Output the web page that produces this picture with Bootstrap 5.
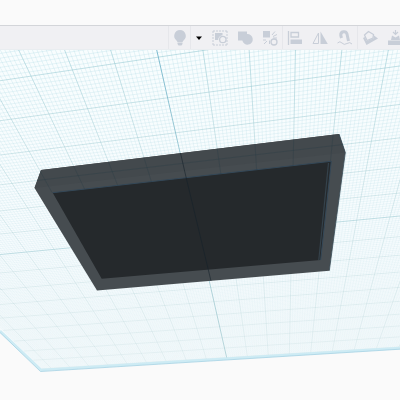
<!DOCTYPE html>
<html lang="en">
<head>
<meta charset="utf-8">
<meta name="viewport" content="width=device-width, initial-scale=1">
<title>3D design workplane</title>
<link href="https://cdn.jsdelivr.net/npm/bootstrap@5.3.0/dist/css/bootstrap.min.css" rel="stylesheet">
<style>
body { background: #fafafa; font-family: "Open Sans", sans-serif; }
.app-header { height: 25px; }
.tool-strip { background: #f0f0f3; border-top: 1px solid #d3d5d9; border-bottom: 1px solid #e9edf0; height: 25px; }
.tool-set { margin-right: -7px; }
.tool { width: 25px; height: 23px; background: transparent; color: #c8ced8; border: 0; }
.tool svg { width: 18px; height: 18px; display: block; }
.tool-light { width: 22px; }
.tool-more { width: 17px; }
.tool-more svg { width: 6px; height: 4px; }
.ruled { border-left: 1px solid #e6e7eb; }
.scene { width: 100%; aspect-ratio: 8 / 7; display: block; }
</style>
<script src="https://cdn.jsdelivr.net/npm/bootstrap@5.3.0/dist/js/bootstrap.bundle.min.js"></script>
</head>
<body class="overflow-hidden">
<header class="app-header"></header>
<nav class="tool-strip d-flex justify-content-end overflow-hidden" aria-label="Edit tools">
  <div class="tool-set d-flex flex-shrink-0 align-items-center">
    <button class="tool tool-light ruled p-0 d-flex align-items-center justify-content-center" aria-label="Toggle notes">
      <svg viewBox="0 0 18 18" fill="currentColor"><path d="M9 1a5.800 5.800 0 0 0-3.500 10.400L6.500 13h5l1-1.600A5.800 5.800 0 0 0 9 1zM6.500 13.500h5V15l-1 1.500h-3L6.500 15z"/></svg>
    </button>
    <button class="tool tool-more ruled p-0 d-flex align-items-center justify-content-center" aria-label="More visibility options">
      <svg viewBox="0 0 6 4"><path d="M0 .5h6L3 4z" fill="#000"/></svg>
    </button>
    <button class="tool p-0 d-flex align-items-center justify-content-center" aria-label="Group preview">
      <svg viewBox="0 0 18 18" fill="none" stroke="currentColor"><path d="M2 2h14M2 16h14M2 2v14M16 2v14" stroke-dasharray="2 1"/><path d="M4 4h7.500v2.200a4.500 4.500 0 0 0-4.300 4.800H4z" fill="currentColor" stroke="none"/><circle cx="11.800" cy="10.500" r="3.200" stroke-width="1.300"/></svg>
    </button>
    <button class="tool p-0 d-flex align-items-center justify-content-center" aria-label="Group">
      <svg viewBox="0 0 18 18" fill="currentColor"><path d="M2 2.500h9v2.600a5.300 5.300 0 1 1-4.700 6.400H2z"/></svg>
    </button>
    <button class="tool p-0 d-flex align-items-center justify-content-center" aria-label="Ungroup">
      <svg viewBox="0 0 18 18" fill="none" stroke="currentColor"><path d="M2 2h7v6.500H2z" fill="currentColor" stroke="none"/><circle cx="13" cy="13" r="3" stroke-width="1.300"/><path d="M11 6l3-3.500M12 7.500l4-2M12 9h4M2 11h3M3 15l3-3M8.500 11.500v3.500"/></svg>
    </button>
    <button class="tool ruled p-0 d-flex align-items-center justify-content-center" aria-label="Align">
      <svg viewBox="0 0 18 18" fill="none" stroke="currentColor"><path d="M2.500 2v14" stroke-width="1.300"/><path d="M5 3.500h7.500v4.500H5z" stroke-width="1.300"/><path d="M4.500 10.500H16v4.500H4.500z" fill="currentColor" stroke="none"/></svg>
    </button>
    <button class="tool p-0 d-flex align-items-center justify-content-center" aria-label="Mirror">
      <svg viewBox="0 0 18 18"><path d="M7.500 4v10.500H2z" fill="none" stroke="currentColor"/><path d="M9.500 2.500L16.800 15h-7.300z" fill="currentColor"/></svg>
    </button>
    <button class="tool p-0 d-flex align-items-center justify-content-center" aria-label="Cruise">
      <svg viewBox="0 0 18 18" fill="none" stroke="currentColor"><path d="M5.500 9L4.800 6.500C4.300 2 10 1.500 11 5L12.500 12" stroke-width="3"/><path d="M1.500 14q2.500-2.500 4.500 0t5 .5 5 .5"/></svg>
    </button>
    <button class="tool ruled p-0 d-flex align-items-center justify-content-center" aria-label="Workplane">
      <svg viewBox="0 0 18 18"><path d="M2 9l2-1 1.500 4 7-2.500.5-3 4 3L5.500 16z" fill="currentColor"/><path d="M3.500 6L7.500 2.500 12.500 5.500l-.5 3.500-6 2.500z" fill="none" stroke="currentColor" stroke-width="1.300"/></svg>
    </button>
    <button class="tool p-0 d-flex align-items-center justify-content-center" aria-label="Drop to workplane">
      <svg viewBox="0 0 18 18"><path d="M9.500 1v4M7 3l2.500 2.500L12 3" fill="none" stroke="currentColor" stroke-width="1.200"/><path d="M6 6.500l3.500 2L13 6.500l1 4.500H5zM2 11.500h15v4.500H2z" fill="currentColor"/></svg>
    </button>
  </div>
</nav>
<main>
  <svg class="scene" viewBox="0 50 400 350" role="img" aria-label="Shallow dark tray seen from below the workplane">
    <defs>
      <linearGradient id="planeFill" x1="0" y1="0" x2="0" y2="1">
        <stop offset="0" stop-color="#f8fdfe"/><stop offset=".6" stop-color="#f7fcfe"/><stop offset="1" stop-color="#f3f9fb"/>
      </linearGradient>
      <linearGradient id="fineInk" gradientUnits="userSpaceOnUse" x1="0" y1="50" x2="0" y2="370">
        <stop offset="0" stop-color="#9fd3df" stop-opacity=".36"/><stop offset=".4" stop-color="#a5d3de" stop-opacity=".26"/><stop offset="1" stop-color="#b0d3da" stop-opacity=".05"/>
      </linearGradient>
      <linearGradient id="majorInk" gradientUnits="userSpaceOnUse" x1="0" y1="50" x2="0" y2="370">
        <stop offset="0" stop-color="#8fc6d0" stop-opacity=".7"/><stop offset=".45" stop-color="#98c5cc" stop-opacity=".45"/><stop offset="1" stop-color="#a5c8cc" stop-opacity=".22"/>
      </linearGradient>
      <linearGradient id="axisInk" gradientUnits="userSpaceOnUse" x1="0" y1="50" x2="0" y2="370">
        <stop offset="0" stop-color="#6db2c9"/><stop offset=".3" stop-color="#86bdcb" stop-opacity=".9"/><stop offset="1" stop-color="#98c3c9" stop-opacity=".7"/>
      </linearGradient>
      <clipPath id="planeClip"><path d="M0 50H400V348L41 370 0 330z"/></clipPath>
      <clipPath id="rimClip"><path d="M41 170L339 134 345.300 152.500 344 161 331.300 161.300 52.700 192.700 34.500 188z"/></clipPath>
    </defs>
    <path d="M0 50H400V348L41 370 0 330z" fill="url(#planeFill)"/>
    <g clip-path="url(#planeClip)" fill="none">
      <path id="fineGrid" stroke="url(#fineInk)" stroke-width=".7"/>
      <path id="majorGrid" stroke="url(#majorInk)" stroke-width=".8"/>
      <path id="axisColumn" stroke="url(#axisInk)" stroke-width=".9"/>
      <path id="axisRow" stroke="#93c6cf" stroke-width=".8" stroke-opacity=".7"/>
    </g>
    <path d="M0 331L41 370 400 348" fill="none" stroke="#cdebf4" stroke-width="2.600"/>
    <path d="M0 332.500L40.500 371.500 400 349.200" fill="none" stroke="#a5d2e3" stroke-width=".8"/>
    <path d="M41 170L339 134 345.300 152.500 329.300 270.700 97 290.500 34.500 188z" fill="#464c50"/>
    <path d="M41 170L339 134 345.300 152.500 34.500 188z" fill="#43494d"/>
    <path d="M339 134L345.300 152.500 329.300 270.700" fill="none" stroke="#394b57" stroke-width=".8"/>
    <path d="M52.700 192.700L331.300 161.300 320.700 260 101.700 278.700z" fill="#25292c"/>
    <path d="M52.700 192.700L331.300 161.300 320.700 260" fill="none" stroke="#344858"/>
    <path d="M328.500 163L318.800 260" stroke="#35424b" stroke-width="1.200"/>
    <path id="trayLines" fill="none" stroke="#243943" stroke-width=".7" stroke-opacity=".4" clip-path="url(#rimClip)"/>
    <path d="M180.500 153L186 177 211 281" fill="none" stroke="#14212a" stroke-width=".8" stroke-opacity=".7"/>
  </svg>
</main>
<script>
// Perspective map of the unit square onto the quad p0 (0,0), p1 (1,0), p2 (1,1), p3 (0,1).
function quadMap(p0, p1, p2, p3) {
  const dx1 = p1[0] - p2[0], dx2 = p3[0] - p2[0], sx = p0[0] - p1[0] + p2[0] - p3[0];
  const dy1 = p1[1] - p2[1], dy2 = p3[1] - p2[1], sy = p0[1] - p1[1] + p2[1] - p3[1];
  const det = dx1 * dy2 - dx2 * dy1;
  const g = (sx * dy2 - dx2 * sy) / det, h = (dx1 * sy - sx * dy1) / det;
  return (s, t) => {
    const w = g * s + h * t + 1;
    return [((p1[0] - p0[0] + g * p1[0]) * s + (p3[0] - p0[0] + h * p3[0]) * t + p0[0]) / w,
            ((p1[1] - p0[1] + g * p1[1]) * s + (p3[1] - p0[1] + h * p3[1]) * t + p0[1]) / w];
  };
}
const unit = quadMap([49, 114], [385, 68], [332, 353], [167, 363]);
const FAR = 15.2;
const at = (u, v) => unit((u + 3) / 8, (v - 1) / (FAR - 1)).map(n => n.toFixed(2)).join(" ");
const column = u => `M${at(u, -1.5)}L${at(u, FAR)}`;
const row = v => `M${at(-9.5, v)}L${at(11, v)}`;
let fine = "", major = "";
for (let i = -95; i <= 110; i++) {
  if (i % 10) fine += column(i / 10); else if (i) major += column(i / 10);
}
for (let j = -15; j <= 152; j++) {
  if (j % 10) fine += row(j / 10); else if (j !== 60) major += row(j / 10);
}
document.getElementById("fineGrid").setAttribute("d", fine);
document.getElementById("majorGrid").setAttribute("d", major);
document.getElementById("trayLines").setAttribute("d", major);
document.getElementById("axisColumn").setAttribute("d", column(0));
document.getElementById("axisRow").setAttribute("d", row(6));
</script>
</body>
</html>
